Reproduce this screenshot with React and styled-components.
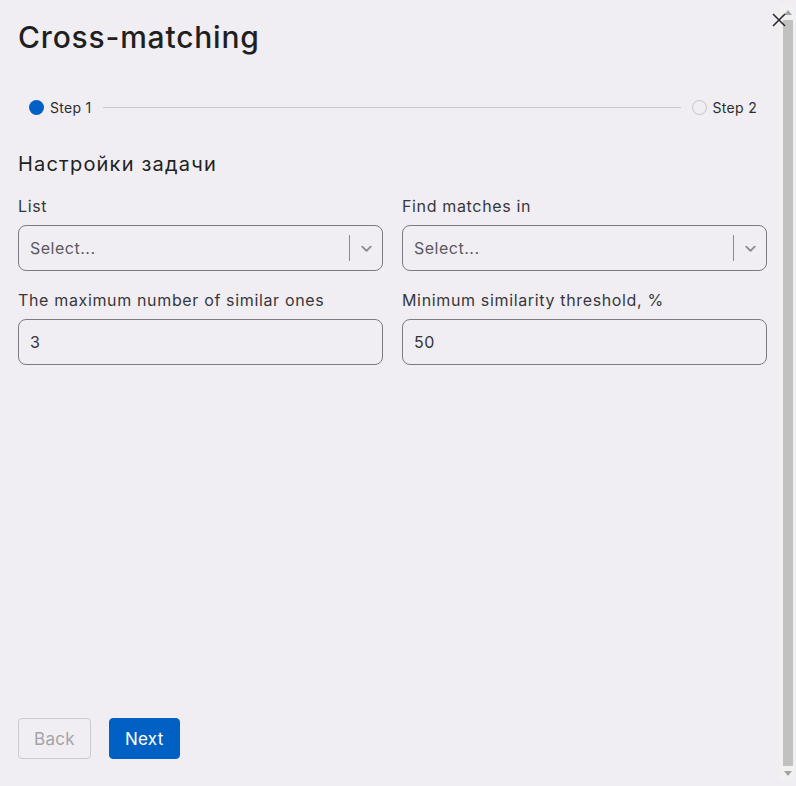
import React from "react";
import styled, { createGlobalStyle } from "styled-components";

const GlobalStyle = createGlobalStyle`
  html, body {
    margin: 0;
    padding: 0;
    background: #f0eef3;
    font-family: Inter, "Open Sans", sans-serif;
    color: #222;
  }
  * { box-sizing: border-box; }
`;

const Shell = styled.div`
  position: relative;
  width: 796px;
  height: 786px;
  padding-top: 5px;
  background: #f0eef3;
  overflow: hidden;
`;

const Body = styled.div`
  height: 776px;
  display: flex;
  flex-direction: column;
  padding: 14px 0 22px 18px;
`;

// the modal's scrollbar, drawn over the right edge
const ScrollTrack = styled.div`
  position: absolute;
  top: 5px;
  right: 1px;
  width: 15px;
  height: 776px;
  background: #f1f1f1;
  display: flex;
  flex-direction: column;
  align-items: center;
`;

const ScrollArrow = styled.span`
  height: 15px;
  display: flex;
  align-items: center;
  justify-content: center;
`;

const ScrollThumb = styled.span`
  flex: 1;
  width: 10px;
  background: #c1c1c1;
`;

const Title = styled.h1`
  margin: 0;
  font-size: 30px;
  font-weight: 500;
  letter-spacing: 0.8px;
  line-height: 36px;
  color: #1f1f22;
`;

const CloseButton = styled.button`
  position: absolute;
  top: 11px;
  right: 8px;
  width: 18px;
  height: 18px;
  padding: 0;
  border: none;
  background: transparent;
  display: flex;
  align-items: center;
  justify-content: center;
  cursor: pointer;
`;

const Stepper = styled.div`
  width: 749px;
  display: flex;
  align-items: center;
  gap: 6px;
  margin-top: 44px;
  padding: 0 10px 0 11px;
`;

const StepDot = styled.span`
  width: 15px;
  height: 15px;
  border-radius: 50%;
  flex: none;
  background: ${(p) => (p.$active ? "#0160c4" : "transparent")};
  border: ${(p) => (p.$active ? "none" : "1.5px solid #c4c4ca")};
`;

const StepLabel = styled.span`
  font-size: 14px;
  letter-spacing: 0.3px;
  color: #2c2c30;
`;

const StepLine = styled.span`
  flex: 1;
  height: 1px;
  background: #c8c8cc;
  margin: 0 5px;
`;

const SectionTitle = styled.h2`
  margin: 36px 0 0;
  font-size: 20px;
  font-weight: 400;
  letter-spacing: 1.2px;
  line-height: 24px;
  color: #222;
`;

const FieldGrid = styled.div`
  display: grid;
  grid-template-columns: 365px 365px;
  column-gap: 19px;
  row-gap: 19px;
  margin-top: 20px;
`;

const Field = styled.div`
  display: flex;
  flex-direction: column;
`;

const Label = styled.label`
  font-size: 16px;
  letter-spacing: 0.65px;
  line-height: 20px;
  color: #37373b;
  margin-bottom: 9px;
`;

const Box = styled.div`
  height: 46px;
  border: 1px solid #7b7b80;
  border-radius: 8px;
  display: flex;
  align-items: center;
  padding-left: 11px;
  font-size: 16px;
  letter-spacing: 0.5px;
  color: #333;
`;

const Placeholder = styled.span`
  flex: 1;
  color: #5a5a5e;
`;

const Indicator = styled.span`
  display: flex;
  align-items: center;
  height: 26px;
  border-left: 1px solid #8a8a8f;
  padding: 0 8px 0 9px;
`;

const Spacer = styled.div`
  flex: 1;
`;

const Footer = styled.div`
  display: flex;
  gap: 18px;
`;

const Button = styled.button`
  height: 41px;
  padding: 0 15px;
  border-radius: 4px;
  font-family: inherit;
  font-size: 17px;
  letter-spacing: 0.3px;
  border: 1px solid ${(p) => (p.$primary ? "#0160c4" : "#cacacf")};
  background: ${(p) => (p.$primary ? "#0160c4" : "transparent")};
  color: ${(p) => (p.$primary ? "#fff" : "#a3a3a8")};
`;

const Chevron = () => (
  <svg width="15" height="15" viewBox="0 0 16 16" fill="none">
    <path d="M3.5 6l4.5 4.5L12.5 6" stroke="#8a8a8f" strokeWidth="2" strokeLinecap="round" strokeLinejoin="round" />
  </svg>
);

const SelectBox = () => (
  <Box>
    <Placeholder>Select...</Placeholder>
    <Indicator>
      <Chevron />
    </Indicator>
  </Box>
);

const Triangle = ({ up }) => (
  <svg width="8" height="5" viewBox="0 0 8 5">
    <path d={up ? "M0 5L4 0L8 5Z" : "M0 0L8 0L4 5Z"} fill="#a3a3a3" />
  </svg>
);

export default function App() {
  return (
    <Shell>
      <GlobalStyle />
      <Body>
        <Title>Cross-matching</Title>
        <Stepper>
          <StepDot $active />
          <StepLabel>Step 1</StepLabel>
          <StepLine />
          <StepDot />
          <StepLabel>Step 2</StepLabel>
        </Stepper>
        <SectionTitle>Настройки задачи</SectionTitle>
        <FieldGrid>
          <Field>
            <Label>List</Label>
            <SelectBox />
          </Field>
          <Field>
            <Label>Find matches in</Label>
            <SelectBox />
          </Field>
          <Field>
            <Label>The maximum number of similar ones</Label>
            <Box>3</Box>
          </Field>
          <Field>
            <Label>Minimum similarity threshold, %</Label>
            <Box>50</Box>
          </Field>
        </FieldGrid>
        <Spacer />
        <Footer>
          <Button disabled>Back</Button>
          <Button $primary>Next</Button>
        </Footer>
      </Body>
      <ScrollTrack aria-hidden="true">
        <ScrollArrow>
          <Triangle up />
        </ScrollArrow>
        <ScrollThumb />
        <ScrollArrow>
          <Triangle />
        </ScrollArrow>
      </ScrollTrack>
      <CloseButton aria-label="Close">
        <svg width="16" height="16" viewBox="0 0 16 16">
          <path d="M2 2l12 12M14 2L2 14" stroke="#2a2a2e" strokeWidth="1.6" />
        </svg>
      </CloseButton>
    </Shell>
  );
}
